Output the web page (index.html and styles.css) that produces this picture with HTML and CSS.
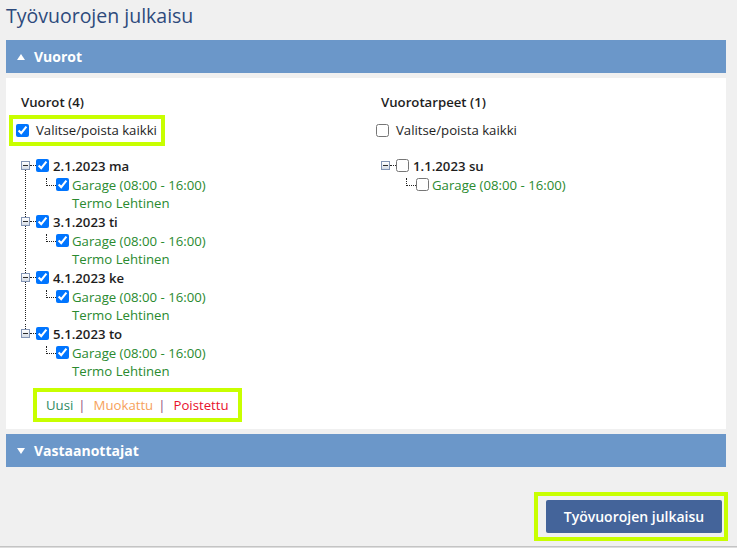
FILE: index.html
```html
<!DOCTYPE html>
<html lang="fi">
    <head>
        <meta charset="utf-8" />
        <title>Työvuorojen julkaisu</title>
        <link rel="stylesheet" href="styles.css">
    </head>
    <body>
        <div id="page-content">
            <h1 class="page-title">Työvuorojen julkaisu</h1>

            <!-- shifts panel -->
            <div class="panel">
                <div class="panel-head"><span class="caret caret-up"></span>Vuorot</div>
                <div class="panel-body">
                    <div class="col">
                        <h2 class="col-title">Vuorot (4)</h2>
                        <label class="select-all hl"><input type="checkbox" checked>Valitse/poista kaikki</label>
                        <ul class="tree">
                            <li class="day">
                                <div class="day-row"><span class="exp"></span><span class="dots"></span><input type="checkbox" checked><span class="day-label">2.1.2023 ma</span></div>
                                <div class="shift-row"><span class="branch"></span><input type="checkbox" checked><span class="shift">Garage (08:00 - 16:00)</span></div>
                                <div class="person-row">Termo Lehtinen</div>
                            </li>
                            <li class="day">
                                <div class="day-row"><span class="exp"></span><span class="dots"></span><input type="checkbox" checked><span class="day-label">3.1.2023 ti</span></div>
                                <div class="shift-row"><span class="branch"></span><input type="checkbox" checked><span class="shift">Garage (08:00 - 16:00)</span></div>
                                <div class="person-row">Termo Lehtinen</div>
                            </li>
                            <li class="day">
                                <div class="day-row"><span class="exp"></span><span class="dots"></span><input type="checkbox" checked><span class="day-label">4.1.2023 ke</span></div>
                                <div class="shift-row"><span class="branch"></span><input type="checkbox" checked><span class="shift">Garage (08:00 - 16:00)</span></div>
                                <div class="person-row">Termo Lehtinen</div>
                            </li>
                            <li class="day">
                                <div class="day-row"><span class="exp"></span><span class="dots"></span><input type="checkbox" checked><span class="day-label">5.1.2023 to</span></div>
                                <div class="shift-row"><span class="branch"></span><input type="checkbox" checked><span class="shift">Garage (08:00 - 16:00)</span></div>
                                <div class="person-row">Termo Lehtinen</div>
                            </li>
                        </ul>
                        <div class="legend hl">
                            <span class="lg-new">Uusi</span><span class="sep">|</span><span class="lg-edit">Muokattu</span><span class="sep">|</span><span class="lg-del">Poistettu</span>
                        </div>
                    </div>
                    <div class="col">
                        <h2 class="col-title">Vuorotarpeet (1)</h2>
                        <label class="select-all"><input type="checkbox">Valitse/poista kaikki</label>
                        <ul class="tree">
                            <li class="day">
                                <div class="day-row"><span class="exp"></span><span class="dots"></span><input type="checkbox"><span class="day-label">1.1.2023 su</span></div>
                                <div class="shift-row"><span class="branch"></span><input type="checkbox"><span class="shift">Garage (08:00 - 16:00)</span></div>
                            </li>
                        </ul>
                    </div>
                </div>
            </div>

            <!-- recipients panel (collapsed) -->
            <div class="panel">
                <div class="panel-head"><span class="caret caret-down"></span>Vastaanottajat</div>
            </div>

            <div class="actions">
                <div class="btn-frame"><a class="btn">Työvuorojen julkaisu</a></div>
            </div>
        </div>
        <div class="footer-line"></div>
    </body>
</html>
```

FILE: styles.css
```css
/* body props */
body {
    background-color:   #F0F0F0;
    font-family:        "Open Sans", "Liberation Sans", sans-serif;
    font-size:          13.2px;
    color:              #1E1E1E;
    margin:             0;
}
#page-content {
    width:              720px;
    padding:            0 6px;
}
.page-title {
    font-size:          19.5px;
    font-weight:        normal;
    color:              #2D4A7C;
    margin:             0;
    padding:            3px 0 0 0;
    height:             37px;
    line-height:        26px;
}
input[type="checkbox"] {
    width:              13px;
    height:             13px;
    margin:             0;
}

/* panels */
.panel {
    margin-bottom:      5px;
}
.panel-head {
    display:            flex;
    align-items:        center;
    height:             33px;
    background-color:   #6B97C9;
    color:              #FFFFFF;
    font-size:          14px;
    font-weight:        bold;
    padding-left:       11px;
}
.caret {
    width:              0;
    height:             0;
    border-left:        4.5px solid transparent;
    border-right:       4.5px solid transparent;
    margin-right:       9px;
}
.caret-up {
    border-bottom:      6px solid #FFFFFF;
}
.caret-down {
    border-top:         6px solid #FFFFFF;
}
.panel-body {
    background-color:   #FFFFFF;
    margin-top:         5px;
    padding:            15px 6px 11px 6px;
    display:            grid;
    grid-template-columns: 360px 1fr;
}

/* columns */
.col-title {
    font-size:          13.2px;
    font-weight:        600;
    line-height:        18px;
    margin:             0 0 0 9px;
}
.select-all {
    display:            inline-flex;
    align-items:        center;
    margin:             8px 0 0 1px;
    padding:            3px 4px 3px 3px;
    line-height:        17px;
}
.select-all input[type="checkbox"] {
    margin:             0 7px 0 0;
}
.hl {
    outline:            4px solid #C8FF00;
}

/* tree */
.tree {
    list-style:         none;
    margin:             14px 0 0 0;
    padding:            0;
}
.tree .day {
    position:           relative;
}
.tree .day:not(:last-child)::before {
    content:            "";
    position:           absolute;
    left:               13px;
    top:                14px;
    bottom:             3px;
    border-left:        1px dotted #222;
}
.tree .day + .day::after {
    content:            "";
    position:           absolute;
    left:               13px;
    top:                0;
    height:             5px;
    border-left:        1px dotted #222;
}
.day-row, .shift-row, .person-row {
    display:            flex;
    align-items:        center;
    height:             19px;
}
.person-row {
    height:             18px;
    padding-left:       60px;
    color:              #2A8A2F;
}
.exp {
    position:           relative;
    box-sizing:         border-box;
    width:              9px;
    height:             9px;
    margin-left:        9px;
    border:             1px solid #8395B5;
    background:         linear-gradient(#FFFFFF, #D5DCE6);
}
.exp::after {
    content:            "";
    position:           absolute;
    left:               1px;
    top:                3px;
    width:              5px;
    height:             1px;
    background:         #2B2B2B;
}
.dots {
    width:              6px;
    border-top:         1px dotted #222;
}
.day-label {
    font-weight:        600;
    margin-left:        4px;
}
.shift-row {
    padding-left:       34px;
}
.branch {
    align-self:         flex-start;
    margin-top:         3px;
    width:              9px;
    height:             7px;
    border-left:        1px dotted #222;
    border-bottom:      1px dotted #222;
}
.shift {
    margin-left:        3px;
    color:              #2A8A2F;
}

/* legend */
.legend {
    display:            inline-block;
    margin:             12px 0 0 25px;
    padding:            4px 9px;
    line-height:        18px;
}
.sep {
    color:              #8C4A7E;
    margin:             0 8px 0 5px;
}
.lg-new     { color: #2E8A63; }
.lg-edit    { color: #F6A15A; }
.lg-del     { color: #E8102C; }

/* action button */
.actions {
    display:            flex;
    justify-content:    flex-end;
    padding-top:        20px;
    margin-right:       -2px;
}
.btn-frame {
    border:             4px solid #C8FF00;
    padding:            4px 2px 4px 8px;
}
a.btn {
    display:            block;
    width:              176px;
    height:             33px;
    line-height:        33px;
    text-align:         center;
    background-color:   #44649A;
    color:              #FFFFFF;
    font-size:          14px;
    font-weight:        600;
    border-radius:      2px;
    text-decoration:    none;
}
.footer-line {
    margin-top:         5px;
    border-top:         1px solid #C4C4C4;
    border-bottom:      1px solid #DDDDDD;
}
```
